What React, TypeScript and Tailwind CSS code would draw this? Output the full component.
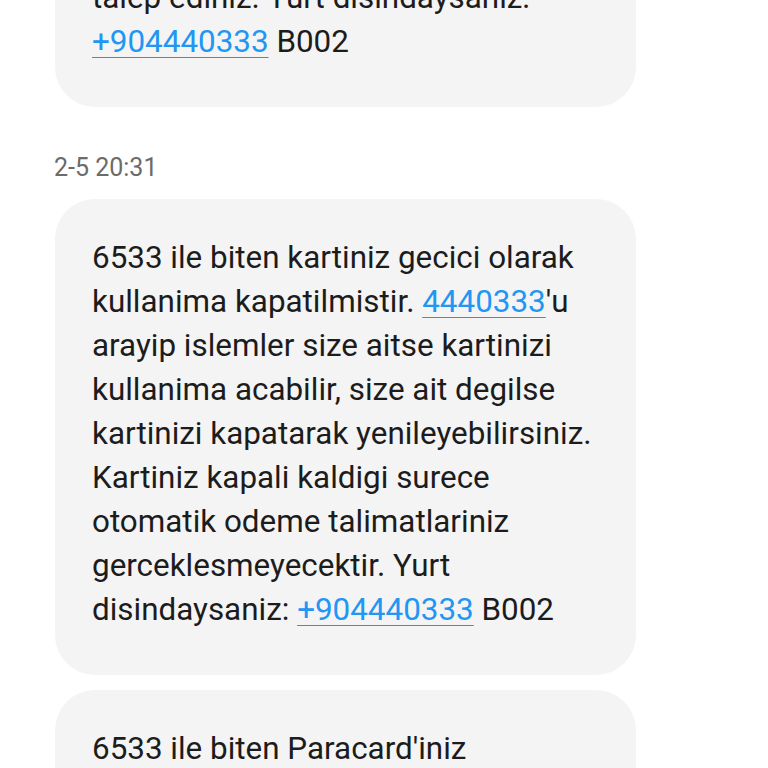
const link = 'text-[#2196f3] underline decoration-[#2196f3] decoration-1 underline-offset-[5px]';

function Bubble({ children, className = '' }: { children: React.ReactNode; className?: string }) {
  return (
    <div className={`ml-[55px] w-[581px] rounded-[40px] bg-[#f4f4f4] pl-[37px] pr-[30px] pt-[37px] pb-[43px] text-[31.4px] leading-[44px] text-[#1c1c1c] ${className}`}>
      {children}
    </div>
  );
}

export default function App() {
  return (
    <div className="h-[768px] w-[768px] overflow-hidden bg-white" style={{ fontFamily: 'Roboto, "Noto Sans", sans-serif' }}>
      <div className="-mt-[61px]">
        <Bubble className="rounded-t-none pt-0">
          talep ediniz. Yurt disindaysaniz:
          <br />
          <span className={link}>+904440333</span> B002
        </Bubble>

        <div className="ml-[54px] mt-[46px] mb-[16px] text-[25px] leading-[30px] text-[#6b6b6b]">2-5 20:31</div>

        <Bubble>
          6533 ile biten kartiniz gecici olarak kullanima kapatilmistir. <span className={link}>4440333</span>'u arayip islemler size aitse kartinizi kullanima acabilir, size ait degilse kartinizi kapatarak yenileyebilirsiniz. Kartiniz kapali kaldigi surece otomatik odeme talimatlariniz gerceklesmeyecektir. Yurt disindaysaniz: <span className={link}>+904440333</span> B002
        </Bubble>

        <Bubble className="mt-[15px]">
          6533 ile biten Paracard'iniz
          <br />
          gecici olarak kullanima kapatilmistir.
        </Bubble>
      </div>
    </div>
  );
}
